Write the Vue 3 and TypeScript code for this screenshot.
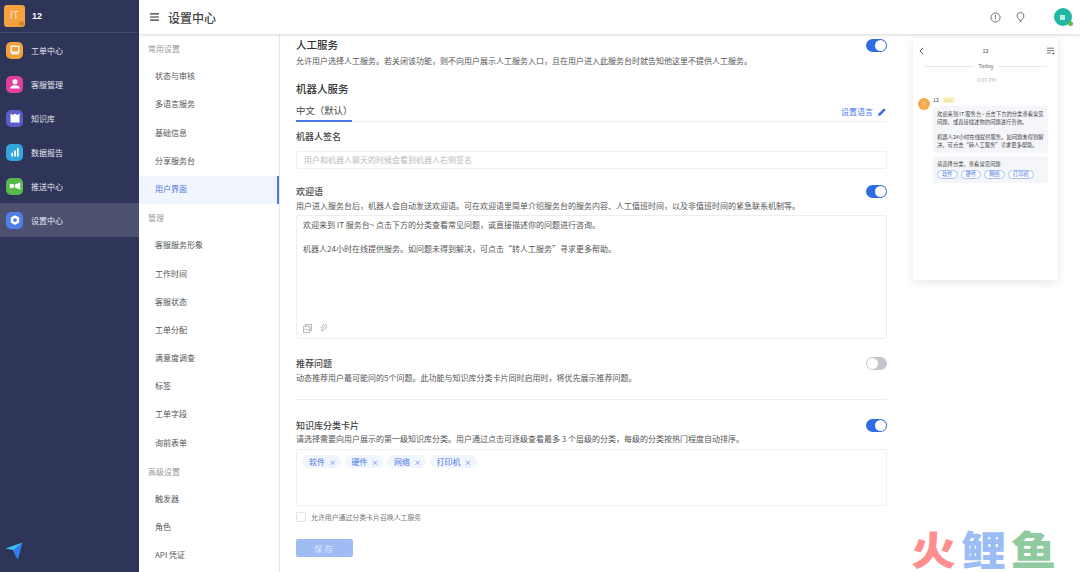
<template>
  <div class="app">
    <!-- 左侧主导航 -->
    <aside class="sidebar">
      <div class="org">
        <div class="org-logo">IT<span class="org-dot"></span></div>
        <span class="org-name">12</span>
      </div>
      <div
        v-for="item in mainNav"
        :key="item.label"
        class="main-item"
        :class="{ active: item.active }"
      >
        <span class="main-icon" :style="{ background: item.color }">
          <svg viewBox="0 0 16 16" width="12" height="12" fill="#fff" v-html="item.icon"></svg>
        </span>
        <span>{{ item.label }}</span>
      </div>
      <svg class="plane" viewBox="0 0 18 18" width="18" height="18">
        <path d="M0.5 6.5 17.5 0.5 10.5 12.5 8 8z" fill="#35c8e6" />
        <path d="M8 8 17.5 0.5 13 17.5 10 13z" fill="#2f7df0" />
      </svg>
    </aside>

    <div class="body">
      <header class="topbar">
        <svg class="menu" viewBox="0 0 10 9" width="9" height="8">
          <path d="M0 1h10M0 4.5h10M0 8h10" stroke="#333" stroke-width="1.2" />
        </svg>
        <span class="top-title">设置中心</span>
        <span class="top-space"></span>
        <svg viewBox="0 0 12 12" width="11" height="11" class="top-icon">
          <circle cx="6" cy="6" r="5" fill="none" stroke="#666" />
          <path d="M6 3v4M6 8.2v1" stroke="#666" />
        </svg>
        <svg viewBox="0 0 12 12" width="11" height="12" class="top-icon bulb">
          <path d="M6 1a3.8 3.8 0 0 0-2 7l1 1.5h2L8 8a3.8 3.8 0 0 0-2-7zM5 11h2" fill="none" stroke="#666" />
        </svg>
        <div class="avatar"><span class="avatar-mark"></span><span class="avatar-dot"></span></div>
      </header>

      <div class="content">
        <!-- 设置二级菜单 -->
        <nav class="subnav">
          <template v-for="group in subNav" :key="group.title">
            <div class="sub-title">{{ group.title }}</div>
            <div
              v-for="item in group.items"
              :key="item"
              class="sub-item"
              :class="{ active: item === '用户界面' }"
            >
              {{ item }}
            </div>
          </template>
        </nav>

        <main class="form">
          <section class="row first">
            <div class="row-head">
              <h3>人工服务</h3>
              <span class="switch on"></span>
            </div>
            <p class="desc">允许用户选择人工服务。若关闭该功能&#xFF0C;则不向用户展示人工服务入口&#xFF0C;且在用户进入此服务台时就告知他这里不提供人工服务。</p>
          </section>

          <h3 class="robot-title">机器人服务</h3>
          <div class="tabs">
            <span class="tab">中文&#xFF08;默认&#xFF09;</span>
            <span class="lang">设置语言
              <svg viewBox="0 0 10 10" width="10" height="10">
                <path d="M1 9l.6-2.4L7 1.2l1.8 1.8L3.4 8.4z" fill="#3d6fe0" />
              </svg>
            </span>
          </div>

          <h4 class="sign-title">机器人签名</h4>
          <div class="input">用户和机器人聊天的时候会看到机器人右侧签名</div>

          <section class="row welcome">
            <div class="row-head">
              <h4>欢迎语</h4>
              <span class="switch on"></span>
            </div>
            <p class="desc">用户进入服务台后&#xFF0C;机器人会自动发送欢迎语。可在欢迎语里简单介绍服务台的服务内容、人工值班时间&#xFF0C;以及非值班时间的紧急联系机制等。</p>
          </section>
          <div class="textarea">
            <p>欢迎来到 IT 服务台~ 点击下方的分类查看常见问题&#xFF0C;或直接描述你的问题进行咨询。</p>
            <p>机器人24小时在线提供服务。如问题未得到解决&#xFF0C;可点击“转人工服务”寻求更多帮助。</p>
            <div class="tools">
              <svg viewBox="0 0 10 10" width="9" height="9">
                <path d="M.5 2.5h7v7h-7zM2.5 2.5V.5h7v7h-2M.5 7.5l2.5-2 2 1.5 2.5-2" fill="none" stroke="#999" stroke-width=".8" />
              </svg>
              <svg viewBox="0 0 10 10" width="9" height="9">
                <path d="M6.5 2 3 5.8a1.2 1.2 0 0 0 1.8 1.6l3.3-3.8a2.2 2.2 0 0 0-3.2-2.9L1.8 4.4" fill="none" stroke="#999" stroke-width=".8" />
              </svg>
            </div>
          </div>

          <section class="row recommend">
            <div class="row-head">
              <h4>推荐问题</h4>
              <span class="switch"></span>
            </div>
            <p class="desc">动态推荐用户最可能问的5个问题。此功能与知识库分类卡片同时启用时&#xFF0C;将优先展示推荐问题。</p>
          </section>

          <div class="divider"></div>

          <section class="row">
            <div class="row-head">
              <h4>知识库分类卡片</h4>
              <span class="switch on"></span>
            </div>
            <p class="desc">请选择需要向用户展示的第一级知识库分类。用户通过点击可逐级查看最多 3 个层级的分类&#xFF0C;每级的分类按热门程度自动排序。</p>
          </section>
          <div class="tag-box">
            <span v-for="tag in tags" :key="tag" class="tag">{{ tag }}<i>×</i></span>
          </div>
          <label class="check"><span class="box"></span>允许用户通过分类卡片召唤人工服务</label>
          <button class="save">保存</button>
        </main>

        <!-- 右侧手机预览 -->
        <aside class="preview-wrap">
          <div class="preview">
            <div class="pv-head">
              <svg viewBox="0 0 6 10" width="5" height="8">
                <path d="M5 1 1 5l4 4" fill="none" stroke="#444" stroke-width="1.2" />
              </svg>
              <span>12</span>
              <svg viewBox="0 0 10 10" width="8" height="8">
                <path d="M0 1.5h9M0 4.5h9M0 7.5h5" stroke="#555" />
                <circle cx="8" cy="8" r="1.2" fill="#555" />
              </svg>
            </div>
            <div class="pv-today"><span>Today</span></div>
            <div class="pv-time">6:06 PM</div>
            <div class="pv-msg">
              <div class="pv-avatar">IT</div>
              <div class="pv-main">
                <div class="pv-name">12 <span>BOT</span></div>
                <div class="pv-bubble">
                  <p>欢迎来到 IT 服务台~ 点击下方的分类查看常见问题&#xFF0C;或直接描述你的问题进行咨询。</p>
                  <p>机器人24小时在线提供服务。如问题未得到解决&#xFF0C;可点击“转人工服务”寻求更多帮助。</p>
                </div>
                <div class="pv-bubble cards">
                  <p>请选择分类&#xFF0C;查看常见问题</p>
                  <div class="pv-tags">
                    <span v-for="tag in tags" :key="tag">{{ tag }}</span>
                  </div>
                </div>
              </div>
            </div>
          </div>
        </aside>
      </div>
    </div>

    <div class="watermark"><b class="w1">火</b><b class="w2">鲤</b><b class="w3">鱼</b></div>
  </div>
</template>

<script setup lang="ts">
interface MainItem {
  label: string;
  color: string;
  icon: string;
  active?: boolean;
}

const mainNav: MainItem[] = [
  { label: '工单中心', color: '#f2a03c', icon: '<path d="M2 2h12v9l-2 3H4l-2-3z" opacity=".9"/><path d="M4 4h8v6H4z" fill="#f2a03c"/>' },
  { label: '客服管理', color: '#e0409c', icon: '<circle cx="8" cy="5" r="3.4"/><path d="M1.5 14c0-3 3-4.5 6.5-4.5s6.5 1.5 6.5 4.5z"/>' },
  { label: '知识库', color: '#5a5cc8', icon: '<path d="M2 2l3 2 3-2 3 2 3-2v12H2z"/>' },
  { label: '数据报告', color: '#33a5dd', icon: '<path d="M3 9h2.4v5H3zM6.8 6h2.4v8H6.8zM10.6 3H13v11h-2.4z"/>' },
  { label: '推送中心', color: '#56b94a', icon: '<path d="M1 5l6 1v4l-6 1zM8 6l7-3v10l-7-3z"/>' },
  { label: '设置中心', color: '#4f7fe8', icon: '<path fill-rule="evenodd" d="M8 1.5 13.6 4.7v6.6L8 14.5 2.4 11.3V4.7zM8 5.5a2.5 2.5 0 1 0 0 5 2.5 2.5 0 0 0 0-5z"/>', active: true },
];

const subNav = [
  { title: '常用设置', items: ['状态与审核', '多语言服务', '基础信息', '分享服务台', '用户界面'] },
  { title: '管理', items: ['客服服务形象', '工作时间', '客服状态', '工单分配', '满意度调查', '标签', '工单字段', '询前表单'] },
  { title: '高级设置', items: ['触发器', '角色', 'API 凭证'] },
];

const tags = ['软件', '硬件', '网络', '打印机'];
</script>

<style>
html,
body {
  margin: 0;
  height: 100%;
  overflow: hidden;
}
</style>

<style scoped>
.app {
  position: relative;
  display: flex;
  width: 1080px;
  height: 572px;
  overflow: hidden;
  background: #fff;
  color: #333;
  font-family: 'Noto Sans CJK SC', 'Liberation Sans', sans-serif;
}

.sidebar {
  position: relative;
  flex: 0 0 139px;
  background: #2e3559;
  color: #e4e6ee;
  font-size: 8px;
}

.org {
  display: flex;
  align-items: center;
  gap: 7px;
  height: 33px;
  padding-left: 4px;
  border-bottom: 1px solid #444a6b;
  box-sizing: border-box;
}

.org-logo {
  position: relative;
  width: 21px;
  height: 22px;
  border-radius: 3px;
  background: #f5a13f;
  color: #fde3c0;
  font-size: 10px;
  line-height: 22px;
  text-align: center;
  font-family: 'Liberation Sans', sans-serif;
}

.org-dot {
  position: absolute;
  right: 1px;
  bottom: 1px;
  width: 5px;
  height: 5px;
  border-radius: 50%;
  background: #d9822b;
}

.org-name {
  color: #fff;
  font-size: 9px;
  font-weight: 700;
  font-family: 'Liberation Sans', sans-serif;
}

.main-item {
  display: flex;
  align-items: center;
  gap: 8px;
  height: 34px;
  padding-left: 6px;
}

.main-item.active {
  background: #4c5170;
}

.main-icon {
  display: flex;
  align-items: center;
  justify-content: center;
  width: 17px;
  height: 17px;
  border-radius: 5px;
}

.plane {
  position: absolute;
  left: 5px;
  bottom: 12px;
}

.body {
  flex: 1;
  min-width: 0;
  display: flex;
  flex-direction: column;
}

.topbar {
  position: relative;
  z-index: 2;
  display: flex;
  align-items: center;
  flex: 0 0 34px;
  padding: 0 8px 0 11px;
  background: #fff;
  box-shadow: 0 1px 3px rgba(0, 0, 0, 0.16);
}

.top-title {
  margin-left: 9px;
  font-size: 12px;
  font-weight: 500;
  color: #444;
}

.top-space {
  flex: 1;
}

.top-icon {
  margin-right: 14px;
}

.top-icon.bulb {
  margin-right: 28px;
}

.avatar {
  position: relative;
  width: 18px;
  height: 18px;
  border-radius: 50%;
  background: #22b8a6;
}

.avatar-mark {
  position: absolute;
  left: 6px;
  top: 7px;
  width: 5px;
  height: 5px;
  background: #bfeee6;
}

.avatar-dot {
  position: absolute;
  right: -1px;
  bottom: 0;
  width: 5px;
  height: 5px;
  border-radius: 50%;
  background: #5cc04a;
}

.content {
  flex: 1;
  min-height: 0;
  display: flex;
}

.subnav {
  flex: 0 0 141px;
  box-sizing: border-box;
  padding-top: 1px;
  border-right: 1px solid #e6e8ee;
  font-size: 8px;
  overflow: hidden;
}

.sub-title {
  height: 28.2px;
  line-height: 28px;
  padding-left: 9px;
  color: #999;
}

.sub-item {
  height: 28.2px;
  line-height: 26.5px;
  padding-left: 16px;
  color: #555;
}

.sub-item.active {
  background: #f1f5fe;
  color: #4a78e6;
  box-shadow: inset -2px 0 0 #4a78e6;
}

.form {
  flex: 0 0 591px;
  padding: 0 0 0 16px;
  box-sizing: content-box;
  width: 591px;
  min-width: 0;
}

h3,
h4,
p {
  margin: 0;
}

h3 {
  font-size: 10.5px;
  font-weight: 500;
  color: #333;
  line-height: 14px;
}

h4 {
  font-size: 9px;
  font-weight: 500;
  color: #444;
  line-height: 13px;
}

.row-head {
  display: flex;
  justify-content: space-between;
  align-items: center;
}

.desc {
  margin-top: 1.5px;
  font-size: 8px;
  color: #555;
  line-height: 12px;
  white-space: nowrap;
}

.first {
  padding-top: 4px;
}

.first .desc {
  margin-top: 3px;
}

.switch {
  position: relative;
  width: 21px;
  height: 13px;
  border-radius: 7px;
  background: #c4c6cb;
}

.switch::after {
  content: '';
  position: absolute;
  top: 1px;
  left: 1px;
  width: 11px;
  height: 11px;
  border-radius: 50%;
  background: #fff;
}

.switch.on {
  background: #2f6de2;
}

.switch.on::after {
  left: 9px;
}

.robot-title {
  margin-top: 15px;
}

.tabs {
  display: flex;
  justify-content: space-between;
  align-items: flex-end;
  margin-top: 6px;
  border-bottom: 1px solid #eceef2;
  height: 19px;
}

.tab {
  width: 56px;
  height: 18px;
  margin-bottom: -1px;
  border-bottom: 2px solid #4a78e6;
  font-size: 9.4px;
  line-height: 16px;
  color: #444;
  white-space: nowrap;
}

.lang {
  display: flex;
  align-items: center;
  gap: 4px;
  height: 19px;
  font-size: 8px;
  color: #4a78e6;
}

.sign-title {
  margin-top: 8px;
}

.input {
  box-sizing: border-box;
  height: 18px;
  margin-top: 8px;
  padding-left: 7px;
  border: 1px solid #eff0f3;
  border-radius: 2px;
  font-size: 8px;
  line-height: 16px;
  color: #bbb;
}

.welcome {
  margin-top: 16px;
}

.textarea {
  position: relative;
  box-sizing: border-box;
  height: 124px;
  margin-top: 3.5px;
  padding: 3px 6px;
  border: 1px solid #eceef2;
  border-radius: 2px;
  font-size: 8px;
  line-height: 12px;
  color: #555;
}

.textarea p + p {
  margin-top: 12px;
}

.tools {
  position: absolute;
  left: 6px;
  bottom: 5px;
  display: flex;
  gap: 7px;
}

.recommend {
  margin-top: 18px;
}

.divider {
  height: 1px;
  margin-top: 15px;
  background: #eceef2;
}

.divider + .row {
  margin-top: 19px;
}

.tag-box {
  display: flex;
  align-items: flex-start;
  gap: 3.5px;
  box-sizing: border-box;
  height: 57px;
  margin-top: 3.5px;
  padding: 5px;
  border: 1px solid #eff0f3;
  border-radius: 2px;
}

.tag {
  height: 13px;
  padding: 0 5px 0 7px;
  border-radius: 7px;
  background: #f1f5fe;
  color: #4a78e6;
  font-size: 8px;
  line-height: 13px;
}

.tag i {
  margin-left: 4px;
  font-size: 7px;
  font-style: normal;
}

.check {
  display: flex;
  align-items: center;
  gap: 5px;
  margin-top: 6px;
  font-size: 6.9px;
  color: #777;
  line-height: 10px;
}

.box {
  width: 8px;
  height: 8px;
  border: 1px solid #e2e4e8;
  border-radius: 1px;
}

.save {
  display: block;
  width: 57px;
  height: 18px;
  margin-top: 17px;
  padding: 0;
  border: none;
  border-radius: 2px;
  background: #a0bcf5;
  color: #dce7fc;
  font-family: inherit;
  font-size: 8.5px;
  letter-spacing: 2px;
}

.preview-wrap {
  flex: 1;
  min-width: 0;
  padding: 4px 22px 0 26px;
}

.preview {
  height: 242px;
  padding: 8px 3px 0 5px;
  box-sizing: border-box;
  background: #fff;
  box-shadow: 0 2px 10px rgba(0, 0, 0, 0.1);
  font-size: 5.3px;
  color: #444;
}

.pv-head {
  display: flex;
  justify-content: space-between;
  align-items: center;
  height: 10px;
  padding-left: 1px;
}

.pv-today {
  display: flex;
  align-items: center;
  gap: 4px;
  margin: 6px 8px 0 7px;
  color: #666;
}

.pv-today::before,
.pv-today::after {
  content: '';
  flex: 1;
  height: 1px;
  background: #e8e9ec;
}

.pv-time {
  margin-top: 6px;
  text-align: center;
  color: #bbb;
}

.pv-msg {
  display: flex;
  gap: 3px;
  margin-top: 14px;
}

.pv-avatar {
  flex: 0 0 12px;
  height: 12px;
  border-radius: 50%;
  background: #f5a94a;
  color: #fde3c0;
  text-align: center;
  line-height: 12px;
  font-size: 5px;
}

.pv-main {
  flex: 1;
  min-width: 0;
  margin: -2px 7px 0 0;
}

.pv-name {
  line-height: 8px;
}

.pv-name span {
  margin-left: 3px;
  padding: 0 2px;
  background: #fbf3c8;
  color: #e8d060;
  font-size: 4px;
}

.pv-bubble {
  margin-top: 2px;
  padding: 4px;
  background: #f5f6f9;
  line-height: 8px;
  border-radius: 2px;
}

.pv-bubble p + p {
  margin-top: 7px;
}

.pv-bubble.cards {
  margin-top: 3px;
}

.pv-tags {
  display: flex;
  gap: 3px;
  margin-top: 2px;
}

.pv-tags span {
  padding: 0 4px;
  border: 1px solid #a9c2f2;
  border-radius: 5px;
  background: #fff;
  color: #4a78e6;
  line-height: 7px;
  white-space: nowrap;
}

.watermark {
  position: absolute;
  right: 24px;
  bottom: 2px;
  display: flex;
  gap: 5px;
  height: 45px;
  font-size: 45px;
  line-height: 1;
  transform: scaleY(0.88);
}

.watermark b {
  font-weight: 900;
}

.w1 {
  color: #ff8e8e;
}

.w2 {
  color: #9bbcf5;
}

.w3 {
  color: #8fcb9f;
}

.menu {
  flex: none;
}
</style>
